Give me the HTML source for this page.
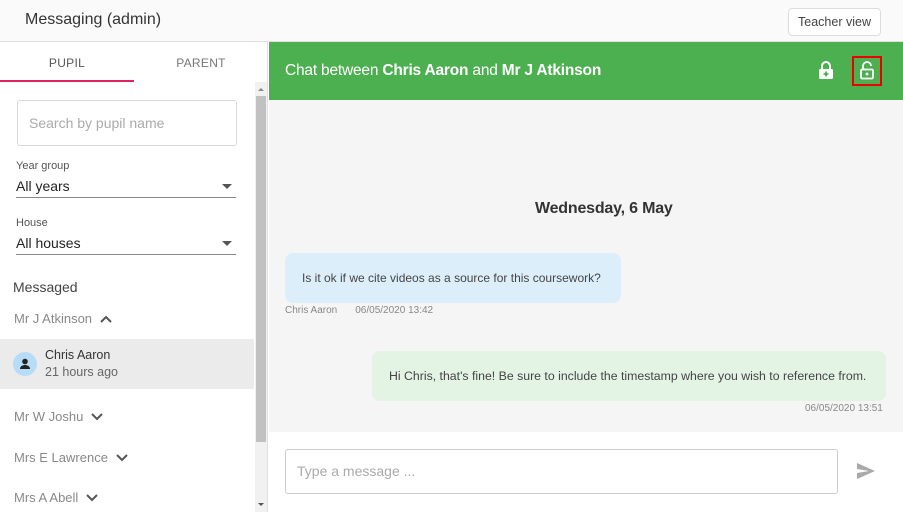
<!DOCTYPE html>
<html><head><style>
*{box-sizing:border-box;margin:0;padding:0}
body{width:903px;height:512px;overflow:hidden;background:#fff;font-family:"Liberation Sans",sans-serif;position:relative;color:#333}
.a{position:absolute}
</style></head><body>
<div class="a" style="left:0;top:0;width:903px;height:42px;background:#fafafa;border-bottom:1px solid #e0e0e0"></div>
<div class="a" style="left:25px;top:11px;font-size:16px;color:#333">Messaging (admin)</div>
<div class="a" style="left:788px;top:8px;width:93px;height:28px;border:1px solid #ddd;border-radius:4px;background:#fff;font-size:12.5px;color:#444;text-align:center;line-height:26px">Teacher view</div>

<div class="a" style="left:0;top:42px;width:268px;height:470px;border-right:1px solid #e0e0e0"></div>
<div class="a" style="left:0;top:56px;width:134px;text-align:center;font-size:12px;color:#555;letter-spacing:.3px">PUPIL</div>
<div class="a" style="left:134px;top:56px;width:134px;text-align:center;font-size:12px;color:#777;letter-spacing:.3px">PARENT</div>
<div class="a" style="left:0;top:80px;width:134px;height:2px;background:#e0245e"></div>
<div class="a" style="left:255px;top:82px;width:12px;height:430px;background:#f1f1f1"></div>
<div class="a" style="left:256px;top:96px;width:10px;height:346px;background:#c1c1c1"></div>
<div class="a" style="left:258px;top:88px;width:0;height:0;border:3px solid transparent;border-bottom-color:#888;border-top:none"></div>
<div class="a" style="left:258px;top:503px;width:0;height:0;border:3px solid transparent;border-top-color:#555;border-bottom:none"></div>

<div class="a" style="left:17px;top:100px;width:220px;height:46px;border:1px solid #d8d8d8;border-radius:3px"></div>
<div class="a" style="left:29px;top:115px;font-size:14px;color:#aaa">Search by pupil name</div>
<div class="a" style="left:16px;top:160px;font-size:11px;color:#555">Year group</div>
<div class="a" style="left:16px;top:178px;font-size:14px;color:#222">All years</div>
<div class="a" style="left:222px;top:184px;border:5px solid transparent;border-top-color:#555;border-bottom:none"></div>
<div class="a" style="left:16px;top:197px;width:220px;height:1px;background:#888"></div>
<div class="a" style="left:16px;top:217px;font-size:11px;color:#555">House</div>
<div class="a" style="left:16px;top:235px;font-size:14px;color:#222">All houses</div>
<div class="a" style="left:222px;top:241px;border:5px solid transparent;border-top-color:#555;border-bottom:none"></div>
<div class="a" style="left:16px;top:254px;width:220px;height:1px;background:#888"></div>

<div class="a" style="left:13px;top:279px;font-size:14px;color:#444">Messaged</div>
<div class="a" style="left:14px;top:311px;font-size:13px;color:#888">Mr J Atkinson <svg width="12" height="8" viewBox="0 0 12 8" style="margin-left:4px"><path d="M1 7L6 2L11 7" stroke="#555" stroke-width="2" fill="none"/></svg></div>
<div class="a" style="left:0;top:339px;width:254px;height:50px;background:#ebebeb"></div>
<div class="a" style="left:13px;top:352px;width:24px;height:24px;border-radius:50%;background:#b7dcf7"></div>
<svg class="a" style="left:17px;top:356px" width="16" height="16" viewBox="0 0 16 16"><circle cx="8" cy="5.5" r="2.8" fill="#222"/><path d="M3 13c0-3 3-4 5-4s5 1 5 4z" fill="#222"/></svg>
<div class="a" style="left:45px;top:348px;font-size:12.5px;color:#333">Chris Aaron</div>
<div class="a" style="left:45px;top:365px;font-size:12.5px;color:#666">21 hours ago</div>
<div class="a" style="left:14px;top:409px;font-size:13px;color:#888">Mr W Joshu <svg width="12" height="8" viewBox="0 0 12 8" style="margin-left:4px"><path d="M1 1L6 6L11 1" stroke="#555" stroke-width="2" fill="none"/></svg></div>
<div class="a" style="left:14px;top:450px;font-size:13px;color:#888">Mrs E Lawrence <svg width="12" height="8" viewBox="0 0 12 8" style="margin-left:4px"><path d="M1 1L6 6L11 1" stroke="#555" stroke-width="2" fill="none"/></svg></div>
<div class="a" style="left:14px;top:490px;font-size:13px;color:#888">Mrs A Abell <svg width="12" height="8" viewBox="0 0 12 8" style="margin-left:4px"><path d="M1 1L6 6L11 1" stroke="#555" stroke-width="2" fill="none"/></svg></div>

<div class="a" style="left:269px;top:42px;width:634px;height:58px;background:#4caf50"></div>
<div class="a" style="left:285px;top:62px;font-size:15.5px;color:#fff;letter-spacing:-0.2px">Chat between <b>Chris Aaron</b> and <b>Mr J Atkinson</b></div>
<svg class="a" style="left:818px;top:61px" width="16" height="19" viewBox="0 0 16 19"><path d="M4 8V5a4 4 0 0 1 8 0v3" stroke="#fff" stroke-width="2" fill="none"/><rect x="1" y="8" width="14" height="10" rx="1.5" fill="#fff"/><path d="M8 10.5v5M5.5 13h5" stroke="#4caf50" stroke-width="1.8"/></svg>
<div class="a" style="left:852px;top:56px;width:30px;height:30px;border:2px solid #e00"></div>
<svg class="a" style="left:859px;top:61px" width="16" height="19" viewBox="0 0 16 19"><path d="M4 8V5a4 4 0 0 1 8 0" stroke="#fff" stroke-width="1.8" fill="none"/><rect x="2" y="8.5" width="12" height="9" rx="1.2" stroke="#fff" stroke-width="1.8" fill="none"/><circle cx="8" cy="13" r="1.4" fill="#fff"/></svg>

<div class="a" style="left:269px;top:100px;width:634px;height:332px;background:#f5f5f5"></div>
<div class="a" style="left:535px;top:200px;font-size:16px;font-weight:bold;color:#333;letter-spacing:-0.2px">Wednesday, 6 May</div>
<div class="a" style="left:285px;top:253px;width:336px;height:50px;background:#ddeefb;border-radius:8px;font-size:12px;color:#444;padding:18px 0 0 17px">Is it ok if we cite videos as a source for this coursework?</div>
<div class="a" style="left:285px;top:305px;font-size:10px;color:#888">Chris Aaron<span style="margin-left:18px">06/05/2020 13:42</span></div>
<div class="a" style="left:372px;top:351px;width:514px;height:50px;background:#e3f3e4;border-radius:8px;font-size:12.3px;color:#444;padding:18px 0 0 17px">Hi Chris, that's fine! Be sure to include the timestamp where you wish to reference from.</div>
<div class="a" style="left:805px;top:403px;font-size:10px;color:#888">06/05/2020 13:51</div>

<div class="a" style="left:285px;top:449px;width:553px;height:45px;border:1px solid #ccc;border-radius:3px"></div>
<div class="a" style="left:297px;top:463px;font-size:14px;color:#aaa">Type a message ...</div>
<svg class="a" style="left:856px;top:462px" width="20" height="18" viewBox="0 0 20 18"><path d="M1 1L19 9L1 17L1 11L13 9L1 7Z" fill="#aaa"/></svg>
</body></html>
